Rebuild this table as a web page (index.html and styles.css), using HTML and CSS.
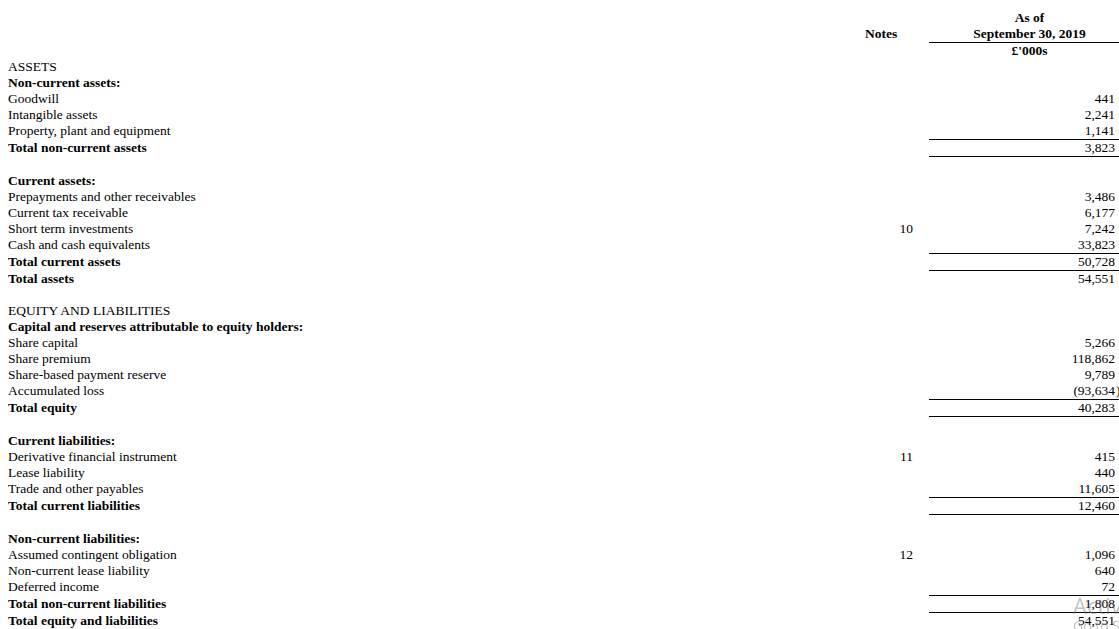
FILE: index.html
```html
<!DOCTYPE html>
<html>
<head>
    <title>Balance Sheet</title>
    <link rel="stylesheet" href="styles.css">
</head>
<body>
    <table class="sheet">
        <colgroup>
            <col class="c-label">
            <col class="c-notes">
            <col class="c-value">
            <col class="c-paren">
        </colgroup>
        <tr>
            <td></td>
            <td></td>
            <td colspan="2" class="head">As of</td>
        </tr>
        <tr>
            <td></td>
            <td class="notes-head">Notes</td>
            <td colspan="2" class="head rule-below">September 30, 2019</td>
        </tr>
        <tr>
            <td></td>
            <td></td>
            <td colspan="2" class="head">£'000s</td>
        </tr>

        <tr><td>ASSETS</td><td></td><td></td><td></td></tr>
        <tr><td class="bold">Non-current assets:</td><td></td><td></td><td></td></tr>
        <tr><td>Goodwill</td><td></td><td class="num">441</td><td></td></tr>
        <tr><td>Intangible assets</td><td></td><td class="num">2,241</td><td></td></tr>
        <tr><td>Property, plant and equipment</td><td></td><td class="num">1,141</td><td></td></tr>
        <tr class="total closed"><td class="bold">Total non-current assets</td><td></td><td class="num">3,823</td><td></td></tr>
        <tr class="blank"><td></td><td></td><td></td><td></td></tr>

        <tr><td class="bold">Current assets:</td><td></td><td></td><td></td></tr>
        <tr><td>Prepayments and other receivables</td><td></td><td class="num">3,486</td><td></td></tr>
        <tr><td>Current tax receivable</td><td></td><td class="num">6,177</td><td></td></tr>
        <tr><td>Short term investments</td><td class="note">10</td><td class="num">7,242</td><td></td></tr>
        <tr><td>Cash and cash equivalents</td><td></td><td class="num">33,823</td><td></td></tr>
        <tr class="total"><td class="bold">Total current assets</td><td></td><td class="num">50,728</td><td></td></tr>
        <tr class="total"><td class="bold">Total assets</td><td></td><td class="num">54,551</td><td></td></tr>
        <tr class="blank"><td></td><td></td><td></td><td></td></tr>

        <tr><td>EQUITY AND LIABILITIES</td><td></td><td></td><td></td></tr>
        <tr><td class="bold">Capital and reserves attributable to equity holders:</td><td></td><td></td><td></td></tr>
        <tr><td>Share capital</td><td></td><td class="num">5,266</td><td></td></tr>
        <tr><td>Share premium</td><td></td><td class="num">118,862</td><td></td></tr>
        <tr><td>Share-based payment reserve</td><td></td><td class="num">9,789</td><td></td></tr>
        <tr><td>Accumulated loss</td><td></td><td class="num">(93,634</td><td class="paren">)</td></tr>
        <tr class="total closed"><td class="bold">Total equity</td><td></td><td class="num">40,283</td><td></td></tr>
        <tr class="blank"><td></td><td></td><td></td><td></td></tr>

        <tr><td class="bold">Current liabilities:</td><td></td><td></td><td></td></tr>
        <tr><td>Derivative financial instrument</td><td class="note">11</td><td class="num">415</td><td></td></tr>
        <tr><td>Lease liability</td><td></td><td class="num">440</td><td></td></tr>
        <tr><td>Trade and other payables</td><td></td><td class="num">11,605</td><td></td></tr>
        <tr class="total closed"><td class="bold">Total current liabilities</td><td></td><td class="num">12,460</td><td></td></tr>
        <tr class="blank"><td></td><td></td><td></td><td></td></tr>

        <tr><td class="bold">Non-current liabilities:</td><td></td><td></td><td></td></tr>
        <tr><td>Assumed contingent obligation</td><td class="note">12</td><td class="num">1,096</td><td></td></tr>
        <tr><td>Non-current lease liability</td><td></td><td class="num">640</td><td></td></tr>
        <tr><td>Deferred income</td><td></td><td class="num">72</td><td></td></tr>
        <tr class="total closed"><td class="bold">Total non-current liabilities</td><td></td><td class="num">1,808</td><td></td></tr>
        <tr><td class="bold">Total equity and liabilities</td><td></td><td class="num">54,551</td><td></td></tr>
    </table>

    <div class="watermark">
        <div class="wm-title">Activate Windows</div>
        <div class="wm-sub">Go to Settings to activate Windows.</div>
    </div>
</body>
</html>
```

FILE: styles.css
```css
html {
    overflow: hidden;
}
body {
    margin: 8px 0 0 8px;
    font-family: "Liberation Serif", "Times New Roman", serif;
    font-size: 13.5px;
    color: #000;
    background: #fff;
}
.sheet {
    margin-top: 2px;
    border-collapse: collapse;
    table-layout: fixed;
    width: 1111px;
}
.c-label {
    width: 852px;
}
.c-notes {
    width: 69px;
}
.c-value {
    width: 187px;
}
.c-paren {
    width: 3px;
}
td {
    padding: 0;
    height: 16px;
    line-height: 16px;
    white-space: nowrap;
    vertical-align: middle;
}
.bold {
    font-weight: bold;
}
.head {
    text-align: center;
    font-weight: bold;
    padding-left: 11px;
}
.notes-head {
    font-weight: bold;
    padding-left: 5px;
}
.rule-below {
    border-bottom: 1px solid #000;
}
.note {
    text-align: right;
    padding-right: 16px;
}
.num {
    text-align: right;
    padding-right: 1px;
}
.paren {
    text-align: left;
    padding: 0;
}
.total td:nth-child(3),
.total td:nth-child(4) {
    border-top: 1px solid #000;
}
.closed td:nth-child(3),
.closed td:nth-child(4) {
    border-bottom: 1px solid #000;
}
.watermark {
    position: fixed;
    left: 1073px;
    top: 592px;
    font-family: "Open Sans", "Noto Sans", sans-serif;
    color: rgba(120, 120, 120, 0.45);
    white-space: nowrap;
    pointer-events: none;
}
.wm-title {
    font-size: 22px;
    line-height: 26px;
}
.wm-sub {
    font-size: 14px;
    line-height: 16px;
}
```
